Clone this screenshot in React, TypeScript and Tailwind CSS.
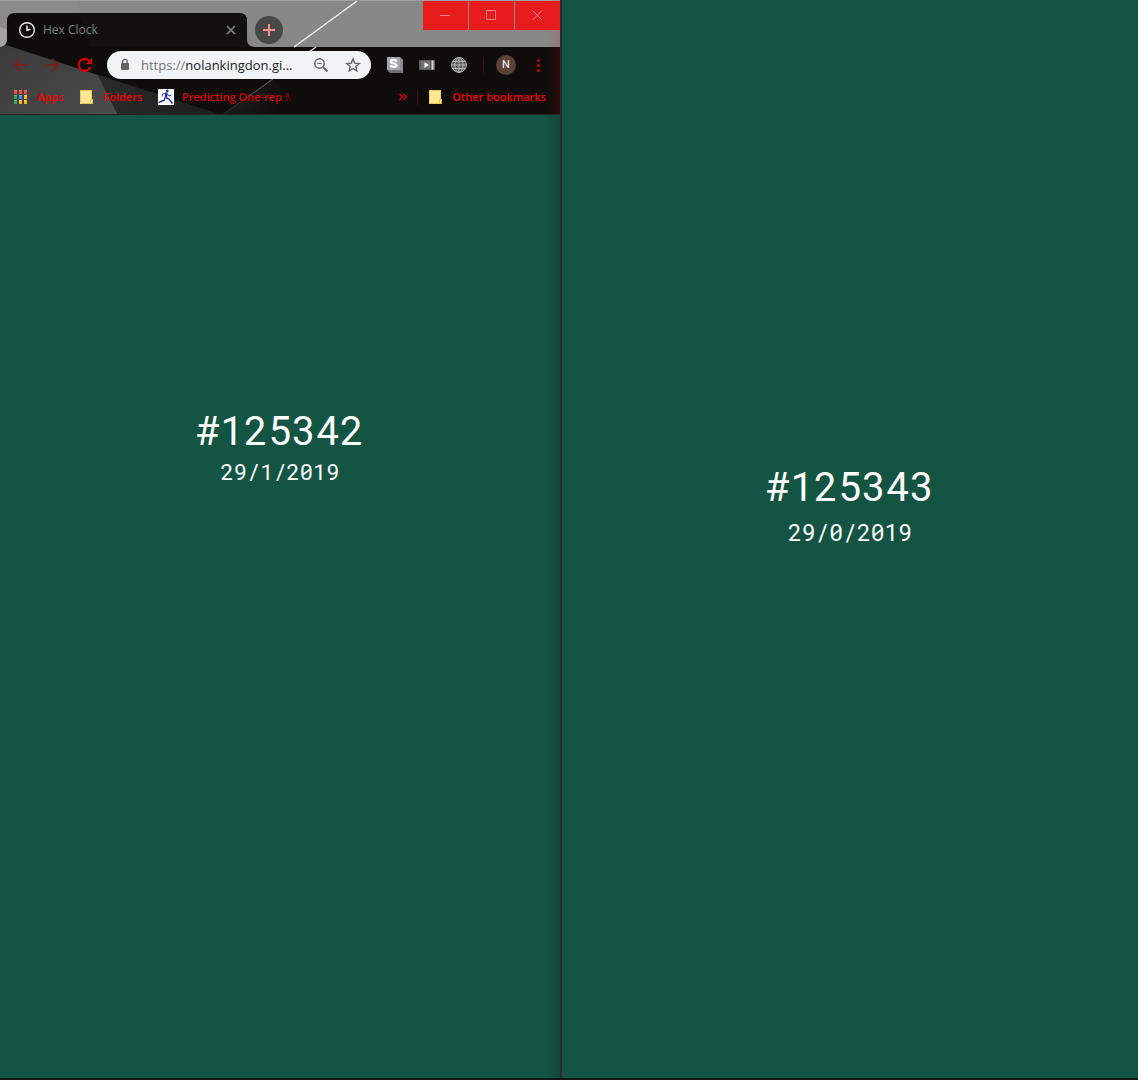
import React from "react";

const uiFont = "font-['Open_Sans','Noto_Sans',sans-serif]";

function ThemeBackdrop() {
  return (
    <svg
      className="absolute inset-0 h-full w-full"
      viewBox="0 0 560 115"
      preserveAspectRatio="none"
      aria-hidden="true"
    >
      <defs>
        <linearGradient id="facet" x1="0" y1="0" x2="1" y2="1">
          <stop offset="0" stopColor="#3a3a3a" />
          <stop offset="1" stopColor="#4c4c4c" />
        </linearGradient>
        <linearGradient id="facetDark" x1="0" y1="0" x2="1" y2="0">
          <stop offset="0" stopColor="#2b2b2b" />
          <stop offset="1" stopColor="#1c1c1b" />
        </linearGradient>
        <linearGradient id="edge" x1="0" y1="0" x2="1" y2="0">
          <stop offset="0" stopColor="#e00000" stopOpacity="0" />
          <stop offset="1" stopColor="#e00000" stopOpacity="0.12" />
        </linearGradient>
        <linearGradient id="ray" x1="1" y1="0" x2="0" y2="1">
          <stop offset="0" stopColor="#777777" />
          <stop offset="1" stopColor="#222222" />
        </linearGradient>
        <linearGradient id="glow" gradientUnits="userSpaceOnUse" x1="235" y1="90" x2="275" y2="115">
          <stop offset="0" stopColor="#1c1c1b" />
          <stop offset="1" stopColor="#0e0d0b" />
        </linearGradient>
      </defs>
      <rect width="560" height="115" fill="#0e0d0b" />
      <rect width="560" height="47" fill="#888886" />
      <path d="M0 0H78L90 47H0Z" fill="#8b8b89" />
      <path d="M0 27L8 30V47H0Z" fill="#a3a3a1" />
      <path d="M357 1L294 47" stroke="#f4f4f4" strokeWidth="1.4" />
      <path d="M0 0.5H560" stroke="#a0a09e" />
      <path d="M0 47C5 47 7 43 7 39V21Q7 13 15 13H239Q247 13 247 21V39Q247 47 255 47Z" fill="#0e0d0b" />
      <path d="M78 13H239Q247 13 247 21V47H90Z" fill="#12110f" />
      <path d="M0 47C3 47 5 46 6 45L98 75L118 115H0Z" fill="url(#facet)" />
      <path d="M98 75L222 115H118Z" fill="url(#facetDark)" />
      <path d="M222 115L273 79L300 115Z" fill="url(#glow)" />
      <path d="M316 47L309 52" stroke="#dddddd" strokeWidth="1.4" />
      <path d="M273 79L222 115" stroke="url(#ray)" />
      <rect x="546" width="14" height="115" fill="url(#edge)" />
      <path d="M0 114.5H560" stroke="#252624" />
    </svg>
  );
}

function WindowButton({ label, path }: { label: string; path: string }) {
  return (
    <button type="button" aria-label={label} className="flex w-[45px] items-center justify-center bg-[#e81c1c]">
      <svg width="11" height="11" viewBox="0 0 11 11" fill="none" stroke="#f98080" aria-hidden="true">
        <path d={path} />
      </svg>
    </button>
  );
}

function TabStrip() {
  return (
    <div className="flex h-[47px] items-start">
      <div className="ml-[7px] mt-[13px] flex h-[34px] w-60 shrink-0 items-center pl-3 pr-[11px]">
        <svg width="16" height="16" viewBox="0 0 16 16" fill="none" stroke="#e8e8e8" strokeWidth="1.4" aria-hidden="true">
          <circle cx="8" cy="8" r="7.3" />
          <path d="M8 3.5V8.3L11.5 7.3" strokeWidth="1.6" />
        </svg>
        <span className="ml-2 flex-1 text-[12px] text-[#7c8083]">Hex Clock</span>
        <button type="button" aria-label="Close tab">
          <svg width="10" height="10" viewBox="0 0 10 10" stroke="#808385" strokeWidth="1.6" aria-hidden="true">
            <path d="M1 1L9 9M9 1L1 9" />
          </svg>
        </button>
      </div>
      <button type="button" aria-label="New tab" className="ml-2 mt-4 flex size-7 items-center justify-center rounded-full bg-[#484846]">
        <svg width="12" height="12" viewBox="0 0 12 12" stroke="#ff8f8f" strokeWidth="2" aria-hidden="true">
          <path d="M6 0V12M0 6H12" />
        </svg>
      </button>
      <div className="ml-auto mt-px flex h-[29px] gap-px">
        <WindowButton label="Minimize" path="M0 5.5H10" />
        <WindowButton label="Maximize" path="M.5 .5H9.500V9.500H.5Z" />
        <WindowButton label="Close" path="M.5 .5L10 10M10 .5L.5 10" />
      </div>
    </div>
  );
}

function Toolbar() {
  return (
    <div className="flex h-9 items-center pl-3">
      <div className="flex w-[95px] shrink-0 gap-4">
        <button type="button" aria-label="Back">
          <svg width="16" height="16" viewBox="0 0 16 16" fill="none" stroke="#7d1f1f" strokeWidth="1.8" aria-hidden="true">
            <path d="M15.500 8H2.500M8.500 1.800L2.300 8L8.500 14.200" />
          </svg>
        </button>
        <button type="button" aria-label="Forward">
          <svg width="16" height="16" viewBox="0 0 16 16" fill="none" stroke="#7d1f1f" strokeWidth="1.8" aria-hidden="true">
            <path d="M2 8H14M8 1.800L14.200 8L8 14.200" />
          </svg>
        </button>
        <button type="button" aria-label="Reload">
          <svg width="18" height="16" viewBox="0 0 18 16" fill="none" stroke="#d40000" strokeWidth="2.200" aria-hidden="true">
            <path d="M14.300 10.200A6 6 0 1 1 13.500 4.200" />
            <path d="M16 .8V7.200H9.600Z" fill="#d40000" stroke="none" />
          </svg>
        </button>
      </div>
      <div className="flex h-7 w-[264px] min-w-0 items-center rounded-full bg-[#f1f3f4] pl-3 pr-[10px]">
        <svg width="12" height="14" viewBox="0 0 12 14" fill="none" aria-hidden="true">
          <rect x="2" y="5" width="8" height="7" rx="1" fill="#5f6368" />
          <path d="M3.700 5.500V3.700A2.300 2.300 0 0 1 8.300 3.700V5.500" stroke="#5f6368" strokeWidth="1.300" />
        </svg>
        <p className="ml-[10px] flex-1 whitespace-nowrap pt-px text-[13px] text-[#202124]">
          <span className="text-[#70757a]">https://</span>nolankingdon.gi...
        </p>
        <button type="button" aria-label="Zoom" className="mr-4">
          <svg width="16" height="16" viewBox="0 0 16 16" fill="none" stroke="#5f6368" aria-hidden="true">
            <circle cx="6.500" cy="6.500" r="4.700" strokeWidth="1.500" />
            <path d="M10 10L14.500 14.500" strokeWidth="1.800" />
            <path d="M4.300 6.500H8.700" strokeWidth="1.100" />
          </svg>
        </button>
        <button type="button" aria-label="Bookmark this page">
          <svg width="16" height="16" viewBox="0 0 16 16" fill="none" stroke="#5f6368" strokeWidth="1.400" aria-hidden="true">
            <path d="M8 2L9.700 6.100L14.200 6.500L10.800 9.400L11.800 13.800L8 11.500L4.200 13.800L5.200 9.400L1.800 6.500L6.300 6.100Z" />
          </svg>
        </button>
      </div>
      <button type="button" aria-label="S extension" className="ml-4 shrink-0">
        <svg width="16" height="16" viewBox="0 0 16 16" aria-hidden="true">
          <path d="M0 0H13L16 3V16H3L0 13Z" fill="#6f7174" />
          <path d="M13 0L16 3V16L13 13Z" fill="#898b8e" />
          <rect width="13" height="13" fill="#a3a5a8" />
          <path d="M9.700 4.300C8.500 2.300 3.800 2.300 3.800 4.600C3.800 7 9.400 5.600 9.400 8.200C9.400 10.400 4.700 10.400 3.400 8.400" fill="none" stroke="#ffffff" strokeWidth="2.400" />
        </svg>
      </button>
      <button type="button" aria-label="Video extension" className="ml-4 shrink-0">
        <svg width="16" height="16" viewBox="0 0 16 16" aria-hidden="true">
          <rect x="0" y="3" width="16" height="10" rx="1" fill="#5b5b5b" />
          <rect x="2" y="4" width="9" height="8" fill="#707070" />
          <path d="M5.500 5.300L10 8L5.500 10.700Z" fill="#ffffff" />
          <rect x="12.500" y="3.500" width="2" height="9" fill="#d8d8d8" />
        </svg>
      </button>
      <button type="button" aria-label="Globe extension" className="ml-4 shrink-0">
        <svg width="16" height="16" viewBox="0 0 16 16" fill="none" stroke="#b4b4b4" aria-hidden="true">
          <circle cx="8" cy="8" r="7.400" fill="#5a5a5a" />
          <ellipse cx="8" cy="8" rx="4" ry="7.400" />
          <path d="M8 .5V15.500M.5 8H15.500M1.800 4.500H14.200M1.800 11.500H14.200" />
        </svg>
      </button>
      <span className="ml-4 h-4 w-px shrink-0 bg-[#4a0c0c]" />
      <button type="button" aria-label="Profile" className="ml-3 flex size-5 shrink-0 items-center justify-center rounded-full bg-[#5d4037] font-['Roboto',sans-serif] text-[11px] text-white">
        N
      </button>
      <button type="button" aria-label="Menu" className="ml-[14px] shrink-0">
        <svg width="16" height="16" viewBox="0 0 16 16" fill="#c90000" aria-hidden="true">
          <circle cx="8.500" cy="3.500" r="1.600" />
          <circle cx="8.500" cy="8.500" r="1.600" />
          <circle cx="8.500" cy="13.500" r="1.600" />
        </svg>
      </button>
    </div>
  );
}

function FolderIcon() {
  return (
    <svg width="16" height="16" viewBox="0 0 16 16" className="shrink-0" aria-hidden="true">
      <path d="M1 1H12.500V10L13.500 10.500V15H1Z" fill="#ffe793" />
      <path d="M1.500 1V14.500H11.500M12.500 1V10M1 1.500H13" fill="none" stroke="#f0cc55" />
      <path d="M11.500 10.500H13.500V14.500H11.500Z" fill="#fff0a8" stroke="#e8c548" />
    </svg>
  );
}

const appDots = [
  "#f04a3e", "#f04a3e", "#f04a3e",
  "#2fa45a", "#2f8cf0", "#f9b414",
  "#2fa45a", "#f9b414", "#f9b414",
];

function BookmarksBar() {
  return (
    <nav aria-label="Bookmarks" className="flex h-8 items-start whitespace-nowrap pl-3 pr-[14px] pt-1.5 text-[11px] font-semibold leading-4 text-[#f00000]">
      <a href="#apps" className="flex shrink-0 gap-[9px]">
        <svg width="16" height="16" viewBox="0 0 16 16" aria-hidden="true">
          {appDots.map((color, i) => (
            <g key={i}>
              <rect x={2 + (i % 3) * 5} y={1 + Math.floor(i / 3) * 5} width="3" height="4" fill={color} />
              <rect x={2 + (i % 3) * 5} y={1 + Math.floor(i / 3) * 5} width="3" height="1" fill="#ffffff" opacity="0.25" />
            </g>
          ))}
        </svg>
        Apps
      </a>
      <a href="#folders" className="ml-4 flex shrink-0 gap-2">
        <FolderIcon />
        Folders
      </a>
      <a href="#predicting" className="ml-4 flex shrink-0 gap-2">
        <svg width="16" height="16" viewBox="0 0 16 16" fill="none" stroke="#2a35ad" className="shrink-0" aria-hidden="true">
          <rect width="16" height="16" fill="#ffffff" stroke="none" />
          <circle cx="9.300" cy="1.900" r="1.400" fill="#2a35ad" stroke="none" />
          <path d="M8.500 3.500L7.800 8.500" strokeWidth="2.400" />
          <path d="M8 4.500L4.500 5L4 7.500M9 4.500L11 7L13.500 6" />
          <path d="M7.800 8.500L11 10L14.500 14.500M7.300 8.500L6 11.500L.5 13.500" strokeWidth="1.500" />
        </svg>
        <span className="bg-linear-to-r from-[#f00000] from-88% to-[#200000] bg-clip-text text-transparent">
          Predicting One-rep M
        </span>
      </a>
      <button type="button" aria-label="More bookmarks" className="ml-auto mt-1 shrink-0">
        <svg width="8" height="8" viewBox="0 0 8 8" fill="none" stroke="#e00000" strokeWidth="1.400" aria-hidden="true">
          <path d="M.5 1L3.500 4L.5 7M4.500 1L7.500 4L4.500 7" />
        </svg>
      </button>
      <span className="ml-[10px] h-4 w-px shrink-0 bg-[#4a0c0c]" />
      <a href="#other" className="ml-[10px] flex shrink-0 gap-2">
        <FolderIcon />
        Other bookmarks
      </a>
    </nav>
  );
}

function Clock({ hex, date, className, dateClass }: { hex: string; date: string; className: string; dateClass: string }) {
  return (
    <main className={`flex flex-1 flex-col items-center text-white ${className}`}>
      <h1 className="font-['Roboto_Mono','Roboto',sans-serif] text-[40px] leading-[48px]">{hex}</h1>
      <p className={`font-['Roboto_Mono','DejaVu_Sans_Mono',monospace] leading-8 ${dateClass}`}>{date}</p>
    </main>
  );
}

export default function App() {
  return (
    <div className="flex min-h-screen border-b-2 border-[#101614] bg-[#145442]">
      <section className={`flex flex-[560] flex-col ${uiFont}`}>
        <header className="relative">
          <ThemeBackdrop />
          <div className="relative">
            <TabStrip />
            <Toolbar />
            <BookmarksBar />
          </div>
        </header>
        <Clock
          hex="#125342"
          date="29/1/2019"
          className="bg-linear-to-r from-[#145442] from-97% to-[#124a3a] pt-[291px]"
          dateClass="mt-0.5 text-[22px]"
        />
      </section>
      <div className="w-0.5 bg-[#2d2b2c]" />
      <section className="flex flex-[576] flex-col">
        <Clock hex="#125343" date="29/0/2019" className="pt-[462px]" dateClass="mt-1.5 text-[23px]" />
      </section>
    </div>
  );
}
